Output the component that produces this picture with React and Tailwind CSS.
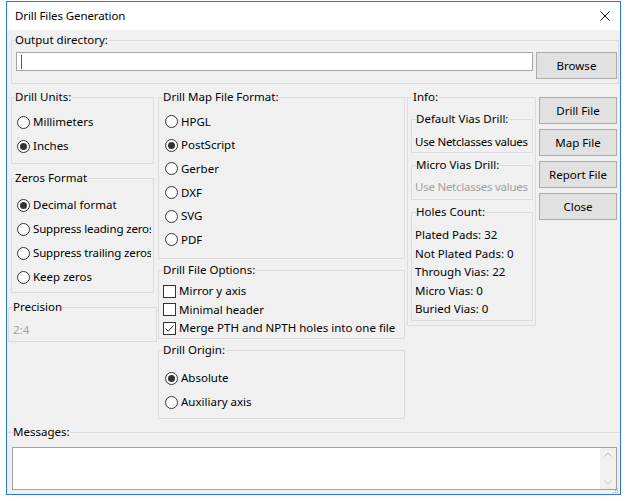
import React from "react";

function Box({ label, className = "", legendClass = "ml-[3px]", children }) {
  return (
    <fieldset className={`border border-[#dcdcdc] min-w-0 ${className}`}>
      <legend className={`leading-[16px] ${legendClass}`}>{label}</legend>
      {children}
    </fieldset>
  );
}

function Radio({ checked, label, rowClass }) {
  return (
    <div className={`flex items-center ${rowClass}`}>
      <span className="w-[13px] h-[13px] rounded-full border border-[#333333] bg-white flex items-center justify-center shrink-0">
        {checked && <span className="w-[7px] h-[7px] rounded-full bg-[#333333]" />}
      </span>
      <span className="ml-[3px] whitespace-nowrap overflow-hidden">{label}</span>
    </div>
  );
}

function Check({ checked, label }) {
  return (
    <div className="flex items-center h-[18.5px]">
      <span className="w-[13px] h-[13px] border border-[#333333] bg-white flex items-center justify-center shrink-0">
        {checked && (
          <svg width="11" height="11" viewBox="0 0 11 11">
            <path d="M1.5 5.5 L4.2 8.2 L9.5 2.5" fill="none" stroke="#333333" strokeWidth="1" />
          </svg>
        )}
      </span>
      <span className="ml-[3px] whitespace-nowrap">{label}</span>
    </div>
  );
}

function Btn({ children, className = "" }) {
  return (
    <div className={`h-[27px] bg-[#e1e1e1] border border-[#adadad] flex items-center justify-center ${className}`}>
      {children}
    </div>
  );
}

export default function App() {
  return (
    <div className="w-[628px] h-[501px] bg-white overflow-hidden font-['Noto_Sans',sans-serif] text-[11.5px] leading-[16px] text-black">
      <div className="ml-[6px] mt-[1px] w-[615px] h-[494px] border border-[#2b79d0] flex flex-col bg-[#f0f0f0]">
        {/* Title bar */}
        <div className="h-[28px] bg-white flex items-center justify-between pl-[8px] pr-[10px] shrink-0">
          <span className="tracking-[-0.1px]">Drill Files Generation</span>
          <svg width="10" height="10" viewBox="0 0 10 10">
            <path d="M0.5 0.5 L9.5 9.5 M9.5 0.5 L0.5 9.5" stroke="#111" strokeWidth="1" />
          </svg>
        </div>

        {/* Body */}
        <div className="flex-1 flex flex-col pl-[4px] pr-[1px] pt-[2px]">
          <Box label="Output directory:" className="h-[52px]">
            <div className="flex items-start mt-[4px] pl-[4px]">
              <div className="w-[517px] h-[19px] bg-white border border-[#a6a6a6] flex items-center pl-[4px]">
                <span className="w-[1px] h-[14px] bg-[#555]" />
              </div>
              <Btn className="ml-[3px] w-[81px]">Browse</Btn>
            </div>
          </Box>

          <div className="flex items-start mt-[5px]">
            {/* Column A */}
            <div className="w-[143px] flex flex-col">
              <Box label="Drill Units:" className="h-[75px]">
                <div className="pt-[5px] pl-[5px] pr-[3px]">
                  <Radio label="Millimeters" rowClass="h-[24px]" />
                  <Radio label="Inches" checked rowClass="h-[24px]" />
                </div>
              </Box>
              <Box label="Zeros Format" className="h-[123px] mt-[6px]">
                <div className="pt-[7px] pl-[5px] pr-[2px]">
                  <Radio label="Decimal format" checked rowClass="h-[24px]" />
                  <Radio label="Suppress leading zeros" rowClass="h-[24px] tracking-[-0.15px]" />
                  <Radio label="Suppress trailing zeros" rowClass="h-[24px] tracking-[-0.15px]" />
                  <Radio label="Keep zeros" rowClass="h-[24px]" />
                </div>
              </Box>
              <Box label="Precision" className="h-[43px] mt-[6px] -ml-[3px] w-[149px]" legendClass="ml-[4px]">
                <div className="pt-[7px] pl-[4px] text-[#a0a0a0]">2:4</div>
              </Box>
            </div>

            {/* Column B */}
            <div className="w-[247px] ml-[4px] flex flex-col">
              <Box label="Drill Map File Format:" className="h-[170px]" legendClass="ml-[4px]">
                <div className="pt-[5px] pl-[6px]">
                  <Radio label="HPGL" rowClass="h-[23.6px]" />
                  <Radio label="PostScript" checked rowClass="h-[23.6px]" />
                  <Radio label="Gerber" rowClass="h-[23.6px]" />
                  <Radio label="DXF" rowClass="h-[23.6px]" />
                  <Radio label="SVG" rowClass="h-[23.6px]" />
                  <Radio label="PDF" rowClass="h-[23.6px]" />
                </div>
              </Box>
              <Box label="Drill File Options:" className="h-[77px] mt-[3px]" legendClass="ml-[4px]">
                <div className="pt-[4px] pl-[4px]">
                  <Check label="Mirror y axis" />
                  <Check label="Minimal header" />
                  <Check label="Merge PTH and NPTH holes into one file" checked />
                </div>
              </Box>
              <Box label="Drill Origin:" className="h-[77px] mt-[3px]" legendClass="ml-[4px]">
                <div className="pt-[8px] pl-[6px]">
                  <Radio label="Absolute" checked rowClass="h-[24px]" />
                  <Radio label="Auxiliary axis" rowClass="h-[24px]" />
                </div>
              </Box>
            </div>

            {/* Column C */}
            <div className="w-[129px] ml-[2px]">
              <Box label="Info:" className="h-[237px]" legendClass="ml-[5px]">
                <div className="pt-[6px] pl-[3px] pr-[2px] flex flex-col">
                  <Box label="Default Vias Drill:" className="h-[42px]" legendClass="ml-[4px]">
                    <div className="pt-[7px] pl-[3px] whitespace-nowrap tracking-[-0.25px]">Use Netclasses values</div>
                  </Box>
                  <Box label="Micro Vias Drill:" className="h-[43px] mt-[4px]" legendClass="ml-[4px]">
                    <div className="pt-[6px] pl-[3px] whitespace-nowrap tracking-[-0.25px] text-[#a0a0a0]">Use Netclasses values</div>
                  </Box>
                  <Box label="Holes Count:" className="h-[117px] mt-[4px]" legendClass="ml-[4px]">
                    <div className="pt-[6px] pl-[3px] flex flex-col">
                      <div className="h-[18.5px] flex items-center">Plated Pads: 32</div>
                      <div className="h-[18.5px] flex items-center">Not Plated Pads: 0</div>
                      <div className="h-[18.5px] flex items-center">Through Vias: 22</div>
                      <div className="h-[18.5px] flex items-center">Micro Vias: 0</div>
                      <div className="h-[18.5px] flex items-center">Buried Vias: 0</div>
                    </div>
                  </Box>
                </div>
              </Box>
            </div>

            {/* Column D */}
            <div className="w-[78px] ml-[3px] mt-[8px] flex flex-col gap-[5px]">
              <Btn>Drill File</Btn>
              <Btn>Map File</Btn>
              <Btn>Report File</Btn>
              <Btn>Close</Btn>
            </div>
          </div>

          {/* Messages */}
          <fieldset className="border-t border-[#dcdcdc] min-w-0 mt-[5px] -ml-[4px] -mr-[1px] relative">
            <legend className="leading-[16px] ml-[6px]">Messages:</legend>
            <div className="mt-[7px] ml-[5px] w-[605px] h-[43px] bg-white border border-[#a0a0a0] flex justify-end">
              <div className="w-[16px] bg-[#f0f0f0] flex flex-col items-center justify-between py-[4px]">
                <svg width="8" height="5" viewBox="0 0 8 5">
                  <path d="M0.5 4.5 L4 1 L7.5 4.5" fill="none" stroke="#c0c0c0" strokeWidth="1" />
                </svg>
                <svg width="8" height="5" viewBox="0 0 8 5">
                  <path d="M0.5 0.5 L4 4 L7.5 0.5" fill="none" stroke="#c0c0c0" strokeWidth="1" />
                </svg>
              </div>
            </div>
            <svg className="absolute right-[1px] bottom-[-4px]" width="6" height="6" viewBox="0 0 6 6">
              <rect x="4" y="0" width="1" height="1" fill="#b0b0b0" />
              <rect x="2" y="2" width="1" height="1" fill="#b0b0b0" />
              <rect x="4" y="2" width="1" height="1" fill="#b0b0b0" />
              <rect x="0" y="4" width="1" height="1" fill="#b0b0b0" />
              <rect x="2" y="4" width="1" height="1" fill="#b0b0b0" />
              <rect x="4" y="4" width="1" height="1" fill="#b0b0b0" />
            </svg>
          </fieldset>
        </div>
      </div>
    </div>
  );
}
